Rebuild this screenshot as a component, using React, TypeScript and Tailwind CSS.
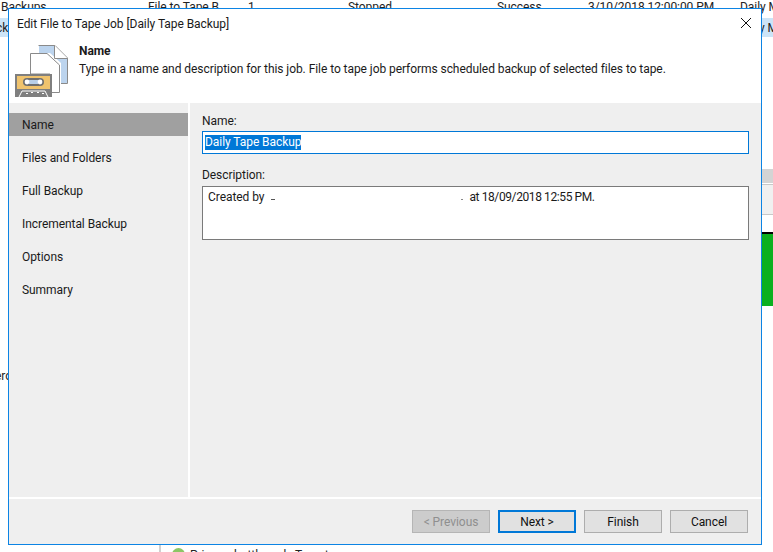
const FONT = "font-['Roboto','Liberation_Sans',sans-serif]";

function JobIcon() {
  return (
    <svg width="54" height="54" viewBox="0 0 54 54" className="shrink-0" fill="none">
      <path d="M23.5 0.5H40L52.5 13V38.5H46" stroke="#8a8a8a" fill="#fff" />
      <path d="M24 1H39V13H52V38H46V18L35 8H24Z" fill="#bcd4ee" />
      <path d="M39.5 0.5V13.5H52.5" stroke="#8a8a8a" fill="#fff" />
      <path d="M15.5 8.5H32L44.5 20V47.5H35V29H15.5Z" stroke="#8a8a8a" fill="#fff" />
      <path d="M0 29H37V52H0Z" fill="#7f7f7f" />
      <path d="M2 31H35V44H2Z" fill="#f0c36d" />
      <rect x="8" y="33" width="21" height="8" rx="4" fill="#6f6f6f" />
      <rect x="14" y="35" width="9" height="4" fill="#b8cfe8" />
      <circle cx="12" cy="37" r="2.4" fill="#fff" />
      <circle cx="25" cy="37" r="2.4" fill="#fff" />
      <path d="M4 52L7 46H30L33 52" stroke="#fff" strokeWidth="1" />
      <rect x="11" y="48" width="2" height="1" fill="#fff" />
      <rect x="16" y="47" width="2" height="1" fill="#fff" />
      <rect x="22" y="47" width="2" height="1" fill="#fff" />
      <rect x="27" y="48" width="2" height="1" fill="#fff" />
    </svg>
  );
}

function NavItem({ label, active }: { label: string; active?: boolean }) {
  return (
    <div className={`h-[23px] mb-[10px] flex items-center pl-[13px] text-[12px] text-[#1a1a1a] ${active ? "bg-[#a0a0a0]" : ""}`}>
      {label}
    </div>
  );
}

function Btn({ label, variant }: { label: string; variant?: "disabled" | "primary" }) {
  const cls =
    variant === "disabled"
      ? "border border-[#b5b5b5] bg-[#cccccc] text-[#8f8f8f]"
      : variant === "primary"
        ? "border-2 border-[#0078d7] bg-[#e1e1e1] text-[#111]"
        : "border border-[#adadad] bg-[#e1e1e1] text-[#111]";
  return (
    <div className={`w-[78px] h-[23px] flex items-center justify-center text-[12px] ${cls}`}>{label}</div>
  );
}

export default function App() {
  return (
    <div className={`relative w-[773px] h-[552px] overflow-hidden bg-white ${FONT} text-[12px] tracking-[-0.06px]`}>
      {/* application behind the dialog */}
      <div className="absolute left-0 top-[-1px] w-full h-[15px] flex items-center text-[12px] text-[#222] whitespace-nowrap">
        <span className="ml-[1px] w-[147px] shrink-0">Backups</span>
        <span className="w-[100px] shrink-0">File to Tape B</span>
        <span className="w-[100px] shrink-0">1</span>
        <span className="w-[149px] shrink-0">Stopped</span>
        <span className="w-[91px] shrink-0">Success</span>
        <span className="w-[152px] shrink-0">3/10/2018 12:00:00 PM</span>
        <span>Daily M</span>
      </div>
      <div className="absolute left-0 top-[18px] w-full h-[19px] bg-[#cce4f7] flex justify-between items-center text-[12px] text-[#222]">
        <span className="ml-[-4px]">ck</span>
        <span className="mr-[-5px]">y M</span>
      </div>
      <div className="absolute right-0 top-[169px] w-[11px] h-[14px] bg-[#d4d4d4]" />
      <div className="absolute right-0 top-[184px] w-[11px] h-[31px] bg-[#f0f0f0] border-y border-[#c8c8c8]" />
      <div className="absolute right-0 top-[232px] w-[11px] h-[74px] bg-[#0bb01f] border-t-2 border-black" />
      <div className="absolute left-[-5px] top-[367px] text-[12px] text-[#222]">ero</div>
      <div className="absolute left-[159px] top-[545px] w-[2px] h-[7px] bg-[#d0d0d0]" />
      <div className="absolute left-[172px] top-[548px] w-[13px] h-[13px] rounded-full bg-[#8cc665]" />
      <div className="absolute left-[190px] top-[546px] text-[12px] text-[#222] whitespace-nowrap">Primary bottleneck: Target</div>

      {/* dialog */}
      <div className="absolute left-[8px] top-[8px] w-[754px] h-[537px] border border-[#0c84e4] bg-[#efefef] flex flex-col">
        <div className="h-[94px] bg-white flex flex-col shrink-0">
          <div className="h-[30px] flex items-center justify-between pl-[8px] pr-[8px] text-[12px] text-[#1a1a1a]">
            <span>Edit File to Tape Job [Daily Tape Backup]</span>
            <svg width="12" height="12" viewBox="0 0 12 12" className="mr-[1px] mt-[-3px]" stroke="#111" strokeWidth="1" fill="none">
              <path d="M1 1L11 11M11 1L1 11" />
            </svg>
          </div>
          <div className="flex pl-[6px]">
            <div className="mt-[6px]"><JobIcon /></div>
            <div className="ml-[10px] mt-[3px] flex flex-col text-[12px] text-[#1a1a1a]">
              <span className="font-bold leading-[18px]">Name</span>
              <span className="leading-[18px]">Type in a name and description for this job. File to tape job performs scheduled backup of selected files to tape.</span>
            </div>
          </div>
        </div>

        <div className="flex-1 flex min-h-0">
          <div className="w-[179px] pt-[10px] border-r-2 border-white box-content shrink-0">
            <NavItem label="Name" active />
            <NavItem label="Files and Folders" />
            <NavItem label="Full Backup" />
            <NavItem label="Incremental Backup" />
            <NavItem label="Options" />
            <NavItem label="Summary" />
          </div>
          <div className="flex-1 pl-[12px] pr-[12px] pt-[10px] text-[12px] text-[#1a1a1a]">
            <div className="leading-[16px] mb-[2px]">Name:</div>
            <div className="h-[23px] border border-[#0078d7] bg-white flex items-center pl-[2px]">
              <span className="bg-[#0078d7] text-white leading-[15px]">Daily Tape Backup</span>
            </div>
            <div className="leading-[16px] mt-[13px] mb-[3px]">Description:</div>
            <div className="h-[54px] border border-[#7a7a7a] bg-white pl-[5px] pt-[2px] leading-[16px]">
              <span>Created by</span>
              <span className="relative inline-block w-[205px] h-[1px]">
                <span className="absolute left-[7px] top-[-1px] w-[4px] h-[1px] bg-[#555]" />
                <span className="absolute left-[197px] top-[-1px] w-[2px] h-[1px] bg-[#888]" />
              </span>
              <span className="tracking-[-0.4px]">at 18/09/2018 12:55 PM.</span>
            </div>
          </div>
        </div>

        <div className="h-[47px] border-t-2 border-white shrink-0 flex justify-end items-start gap-[8px] pt-[11px] pr-[13px]">
          <Btn label="< Previous" variant="disabled" />
          <Btn label="Next >" variant="primary" />
          <Btn label="Finish" />
          <Btn label="Cancel" />
        </div>
      </div>
    </div>
  );
}
